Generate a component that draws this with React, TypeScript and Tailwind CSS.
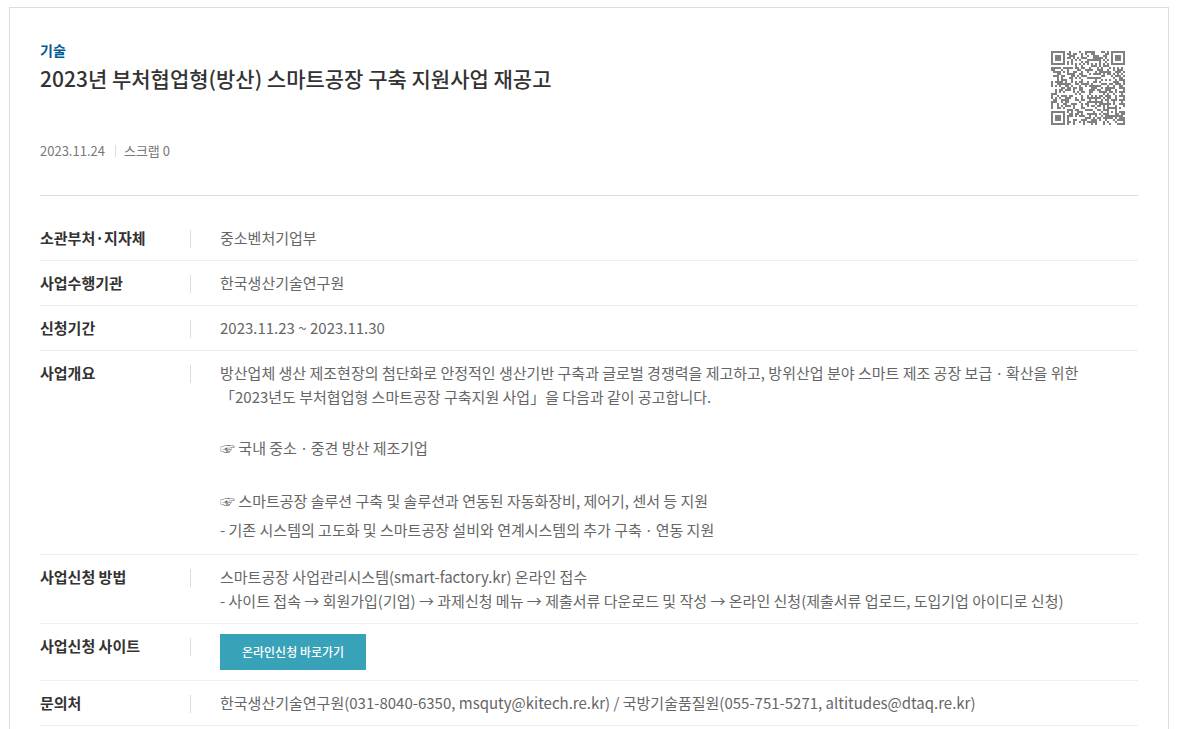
import * as React from 'react';

const PAGE_URL =
  'https://www.bizinfo.go.kr/web/lay1/bbs/S1T122C128/AS/74/view.do?pblancId=PBLN_000000000091500';

// QR version 5, error correction level L, mask 2
const SIZE = 37;
const DATA_CODEWORDS = 108;
const EC_CODEWORDS = 26;
const MASK = 2;

const gfMultiply = (x: number, y: number) => {
  let z = 0;
  for (let i = 7; i >= 0; i--) {
    z = (z << 1) ^ ((z >>> 7) * 0x11d);
    z ^= ((y >>> i) & 1) * x;
  }
  return z;
};

const errorCorrection = (data: number[]) => {
  const divisor: number[] = new Array(EC_CODEWORDS).fill(0);
  divisor[EC_CODEWORDS - 1] = 1;
  let root = 1;
  for (let i = 0; i < EC_CODEWORDS; i++) {
    for (let j = 0; j < EC_CODEWORDS; j++) {
      divisor[j] = gfMultiply(divisor[j], root);
      if (j + 1 < EC_CODEWORDS) divisor[j] ^= divisor[j + 1];
    }
    root = gfMultiply(root, 2);
  }
  const result: number[] = new Array(EC_CODEWORDS).fill(0);
  data.forEach((b) => {
    const factor = b ^ (result.shift() as number);
    result.push(0);
    divisor.forEach((c, i) => { result[i] ^= gfMultiply(c, factor); });
  });
  return result;
};

const encodeText = (text: string) => {
  const stream: number[] = [];
  const push = (v: number, n: number) => {
    for (let i = n - 1; i >= 0; i--) stream.push((v >>> i) & 1);
  };
  push(4, 4);
  push(text.length, 8);
  for (const c of text) push(c.charCodeAt(0), 8);
  push(0, 4);

  const data: number[] = [];
  for (let i = 0; i < stream.length; i += 8) {
    data.push(parseInt(stream.slice(i, i + 8).join(''), 2));
  }
  for (let pad = 0xec; data.length < DATA_CODEWORDS; pad ^= 0xec ^ 0x11) data.push(pad);
  return [...data, ...errorCorrection(data)];
};

const buildMatrix = (text: string) => {
  const dark = Array.from({ length: SIZE }, () => new Array<boolean>(SIZE).fill(false));
  const fixed = Array.from({ length: SIZE }, () => new Array<boolean>(SIZE).fill(false));
  const set = (x: number, y: number, v: boolean) => {
    if (x < 0 || y < 0 || x >= SIZE || y >= SIZE) return;
    dark[y][x] = v;
    fixed[y][x] = true;
  };

  // timing, finder and alignment patterns
  for (let i = 0; i < SIZE; i++) {
    set(6, i, i % 2 === 0);
    set(i, 6, i % 2 === 0);
  }
  [[3, 3], [SIZE - 4, 3], [3, SIZE - 4]].forEach(([cx, cy]) => {
    for (let dy = -4; dy <= 4; dy++) {
      for (let dx = -4; dx <= 4; dx++) {
        const d = Math.max(Math.abs(dx), Math.abs(dy));
        set(cx + dx, cy + dy, d !== 2 && d !== 4);
      }
    }
  });
  for (let dy = -2; dy <= 2; dy++) {
    for (let dx = -2; dx <= 2; dx++) {
      set(30 + dx, 30 + dy, Math.max(Math.abs(dx), Math.abs(dy)) !== 1);
    }
  }

  // format bits
  const format = 8 | MASK;
  let rem = format;
  for (let i = 0; i < 10; i++) rem = (rem << 1) ^ ((rem >>> 9) * 0x537);
  const bits = ((format << 10) | rem) ^ 0x5412;
  const bit = (i: number) => ((bits >>> i) & 1) === 1;
  for (let i = 0; i <= 5; i++) set(8, i, bit(i));
  set(8, 7, bit(6));
  set(8, 8, bit(7));
  set(7, 8, bit(8));
  for (let i = 9; i < 15; i++) set(14 - i, 8, bit(i));
  for (let i = 0; i < 8; i++) set(SIZE - 1 - i, 8, bit(i));
  for (let i = 8; i < 15; i++) set(8, SIZE - 15 + i, bit(i));
  set(8, SIZE - 8, true);

  // data, zigzag from the bottom right
  const all = encodeText(text);
  let n = 0;
  for (let right = SIZE - 1; right >= 1; right -= 2) {
    if (right === 6) right = 5;
    for (let v = 0; v < SIZE; v++) {
      for (let j = 0; j < 2; j++) {
        const x = right - j;
        const y = ((right + 1) & 2) === 0 ? SIZE - 1 - v : v;
        if (fixed[y][x]) continue;
        const b = n < all.length * 8 && ((all[n >>> 3] >>> (7 - (n & 7))) & 1) === 1;
        n++;
        dark[y][x] = b !== (x % 3 === 0);
      }
    }
  }
  return dark;
};

const QR_PATH = buildMatrix(PAGE_URL)
  .map((row, y) => row.map((v, x) => (v ? `M${x} ${y}h1v1h-1z` : '')).join(''))
  .join('');

const QrCode: React.FC = () => (
  <svg
    viewBox="0 0 37 37"
    className="m-[13px] h-[74px] w-[74px] shrink-0 text-[#808080]"
    shapeRendering="crispEdges"
    aria-hidden="true"
  >
    <path d={QR_PATH} fill="currentColor" />
  </svg>
);

interface RowProps {
  label: string;
  children: React.ReactNode;
}

const Row: React.FC<RowProps> = ({ label, children }) => (
  <div className="flex border-b border-[#eee] py-[10px]">
    <dt className="flex w-[151px] shrink-0 items-start justify-between font-bold text-[#333]">
      {label}
      <span className="mt-1 h-[18px] w-px bg-[#ddd]" />
    </dt>
    <dd className="min-w-0 flex-1 pl-[29px] text-[#666]">{children}</dd>
  </div>
);

export default function App() {
  return (
    <main className="mx-2 mt-[7px] ml-[9px] border border-[#ddd] bg-white px-[30px] pt-[30px] pb-10 font-['Noto_Sans_CJK_KR',sans-serif]">
      <header className="flex justify-between border-b border-[#ddd] pb-[34px]">
        <div className="pt-[2px]">
          <p className="text-sm leading-5 font-bold text-[#005a92]">기술</p>
          <h1 className="text-[21px] leading-9 font-medium text-[#333]">
            2023년 부처협업형(방산) 스마트공장 구축 지원사업 재공고
          </h1>
          <div className="mt-[45px] flex items-center text-[13px] leading-5 text-[#777]">
            <span>2023.11.24</span>
            <span className="mr-2 ml-[10px] h-3 w-px bg-[#ddd]" />
            <span>스크랩 0</span>
          </div>
        </div>
        <QrCode />
      </header>

      <dl className="mt-5 text-[15px] leading-6">
        <Row label="소관부처·지자체">중소벤처기업부</Row>
        <Row label="사업수행기관">한국생산기술연구원</Row>
        <Row label="신청기간">2023.11.23 ~ 2023.11.30</Row>
        <Row label="사업개요">
          <p>
            방산업체 생산 제조현장의 첨단화로 안정적인 생산기반 구축과 글로벌 경쟁력을 제고하고, 방위산업 분야 스마트 제조 공장 보급ㆍ확산을 위한
            <br />
            「2023년도 부처협업형 스마트공장 구축지원 사업」을 다음과 같이 공고합니다.
          </p>
          <p className="mt-6 leading-[29px]">☞ 국내 중소ㆍ중견 방산 제조기업</p>
          <p className="mt-6 leading-[29px]">
            ☞ 스마트공장 솔루션 구축 및 솔루션과 연동된 자동화장비, 제어기, 센서 등 지원
            <br />
            - 기존 시스템의 고도화 및 스마트공장 설비와 연계시스템의 추가 구축ㆍ연동 지원
          </p>
        </Row>
        <Row label="사업신청 방법">
          <p>
            스마트공장 사업관리시스템(smart-factory.kr) 온라인 접수
            <br />
            - 사이트 접속 → 회원가입(기업) → 과제신청 메뉴 → 제출서류 다운로드 및 작성 → 온라인 신청(제출서류 업로드, 도입기업 아이디로 신청)
          </p>
        </Row>
        <Row label="사업신청 사이트">
          <button
            type="button"
            className="block h-9 bg-[#37a2b8] px-[22px] text-xs font-medium text-white hover:bg-[#2f90a4]"
          >
            온라인신청 바로가기
          </button>
        </Row>
        <Row label="문의처">
          한국생산기술연구원(031-8040-6350, msquty@kitech.re.kr) / 국방기술품질원(055-751-5271, altitudes@dtaq.re.kr)
        </Row>
      </dl>
    </main>
  );
}
